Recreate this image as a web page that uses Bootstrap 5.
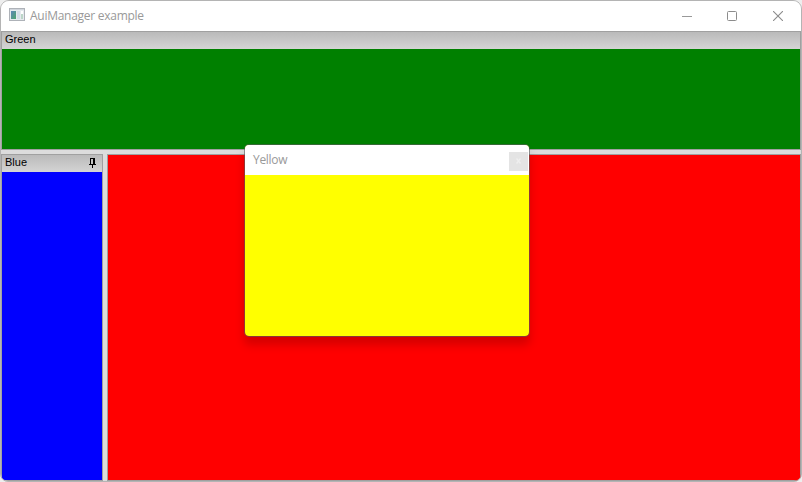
<!DOCTYPE html>
<html lang="en">
<head>
<meta charset="utf-8">
<title>AuiManager example</title>
<link href="https://cdn.jsdelivr.net/npm/bootstrap@5.3.0/dist/css/bootstrap.min.css" rel="stylesheet">
<style>
body{background:#eee;font-family:"Open Sans","Noto Sans",sans-serif}
.app-window{width:802px;height:482px;border:1px solid #b4b4b4;border-radius:9px 9px 8px 8px;background:#dcdcdc}
.title-bar{height:30px;padding:0 0 0 8px;font-size:12px;line-height:30px;color:#999;background:#fff}
.title-bar svg{display:block}
.app-icon{margin-right:5px}
.title-text{letter-spacing:-.27px}
.win-btn{width:45.5px}
.win-max{padding-right:1px}
.pane{border:1px solid #a0a0a0}
.caption{height:17px;padding:0 3px;background:linear-gradient(#bababa,#d4d4d4);color:#000;font:11px/15px "Liberation Sans",Arial,sans-serif}
.pin{margin:3px 2px 0 0}
.pane-green{height:119px}
.pane-green .fill{background:#008000}
.pane-blue{width:102px}
.pane-blue .fill{background:#00f}
.pane-red{background:#f00}
.dock{gap:4px}
.float-win{left:243px;top:143px;width:286px;height:193px;border:1px solid rgba(90,90,90,.6);border-radius:5px;background:#ff0;background-clip:padding-box;box-shadow:0 8px 10px rgba(0,0,0,.17)}
.float-title{height:30px;padding:0 0 0 8px;background:#fff;color:#999;font-size:12px;line-height:30px;letter-spacing:-.3px}
.float-close{width:19px;height:19px;margin-top:2px;margin-right:1px;background:#e4e4e4}
</style>
<script src="https://cdn.jsdelivr.net/npm/bootstrap@5.3.0/dist/js/bootstrap.bundle.min.js"></script>
</head>
<body class="m-0 overflow-hidden">
<div class="app-window position-relative d-flex flex-column overflow-hidden">
  <header class="title-bar d-flex align-items-center flex-shrink-0">
    <svg class="app-icon" width="16" height="16" viewBox="0 0 16 16" shape-rendering="crispEdges">
      <defs><linearGradient id="g" x1="0" y1="0" x2="1" y2="1"><stop offset="0" stop-color="#5f86b8"/><stop offset="1" stop-color="#4ea66c"/></linearGradient></defs>
      <path fill="#aeb2b8" d="M0 0h16v13H0z"/><path fill="#e6eaee" d="M1 2h14v10H1z"/><path fill="#d0d5dc" d="M1 1h14v1H1z"/>
      <path fill="url(#g)" d="M2 3h5v8H2z"/><path fill="#d5dde6" d="M8 3h3v8H8z"/><path fill="#fff" d="M12 3h2v3h-2z"/><path fill="#bcd6c8" d="M12 6h2v5h-2z"/>
    </svg>
    <span class="title-text me-auto">AuiManager example</span>
    <span class="win-btn d-flex justify-content-center"><svg width="10" height="10"><path d="M0 5.5h10" stroke="#999"/></svg></span>
    <span class="win-btn win-max d-flex justify-content-center"><svg width="10" height="10"><rect x=".5" y=".5" width="9" height="9" rx="1" fill="none" stroke="#8c8c8c"/></svg></span>
    <span class="win-btn d-flex justify-content-center"><svg width="10" height="10"><path d="M0 0l10 10M10 0L0 10" stroke="#8c8c8c" stroke-width="1.100"/></svg></span>
  </header>
  <main class="dock d-flex flex-column flex-grow-1">
    <section class="pane pane-green d-flex flex-column">
      <div class="caption">Green</div>
      <div class="fill flex-grow-1"></div>
    </section>
    <div class="dock d-flex flex-grow-1">
      <section class="pane pane-blue d-flex flex-column">
        <div class="caption d-flex justify-content-between">Blue
          <svg class="pin" width="9" height="10" viewBox="0 0 9 10" shape-rendering="crispEdges"><path d="M2 0h5v6h1v1H5v3H4V7H1V6h1zM3 1v5h2V1z" fill="#000" fill-rule="evenodd"/></svg>
        </div>
        <div class="fill flex-grow-1"></div>
      </section>
      <section class="pane pane-red flex-grow-1"></section>
    </div>
  </main>
  <div class="float-win position-absolute overflow-hidden">
    <div class="float-title d-flex align-items-center"><span class="me-auto">Yellow</span>
      <span class="float-close d-flex align-items-center justify-content-center"><svg width="5" height="6"><path d="M.5 .5l4 5M4.500 .5l-4 5" stroke="#efefef" stroke-width="1.300"/></svg></span>
    </div>
  </div>
</div>
</body>
</html>
